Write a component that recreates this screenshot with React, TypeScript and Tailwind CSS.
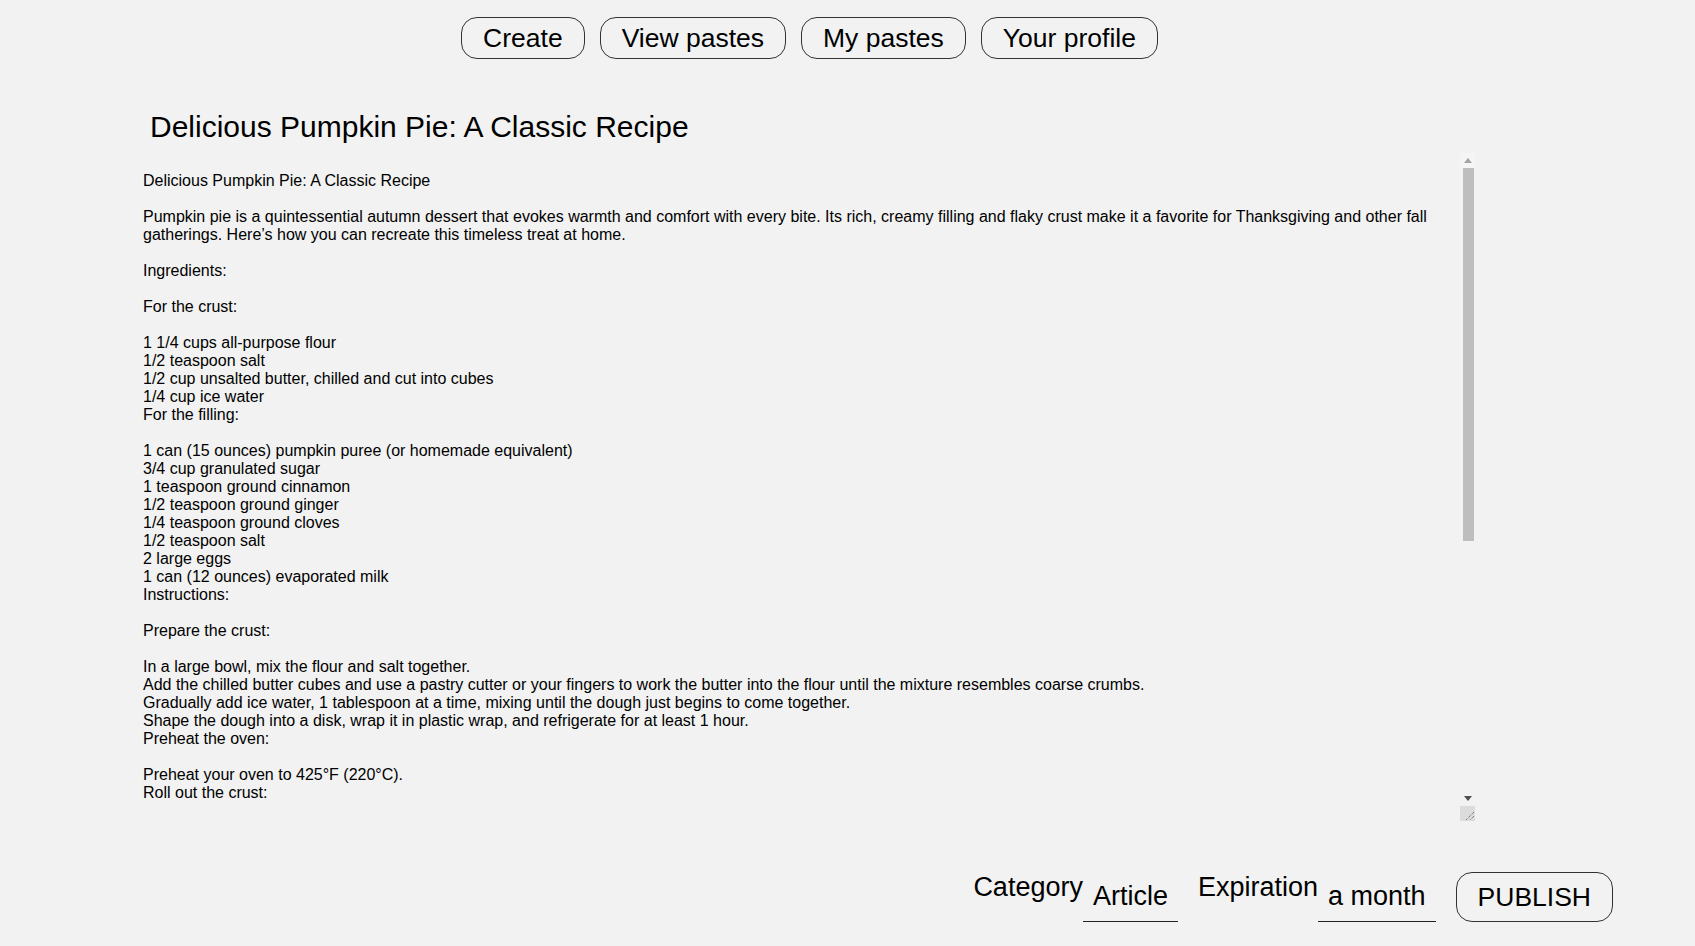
import React from "react";

const recipe = `Delicious Pumpkin Pie: A Classic Recipe

Pumpkin pie is a quintessential autumn dessert that evokes warmth and comfort with every bite. Its rich, creamy filling and flaky crust make it a favorite for Thanksgiving and other fall gatherings. Here’s how you can recreate this timeless treat at home.

Ingredients:

For the crust:

1 1/4 cups all-purpose flour
1/2 teaspoon salt
1/2 cup unsalted butter, chilled and cut into cubes
1/4 cup ice water
For the filling:

1 can (15 ounces) pumpkin puree (or homemade equivalent)
3/4 cup granulated sugar
1 teaspoon ground cinnamon
1/2 teaspoon ground ginger
1/4 teaspoon ground cloves
1/2 teaspoon salt
2 large eggs
1 can (12 ounces) evaporated milk
Instructions:

Prepare the crust:

In a large bowl, mix the flour and salt together.
Add the chilled butter cubes and use a pastry cutter or your fingers to work the butter into the flour until the mixture resembles coarse crumbs.
Gradually add ice water, 1 tablespoon at a time, mixing until the dough just begins to come together.
Shape the dough into a disk, wrap it in plastic wrap, and refrigerate for at least 1 hour.
Preheat the oven:

Preheat your oven to 425°F (220°C).
Roll out the crust:

On a lightly floured surface, roll out the dough into a 12-inch circle.
Transfer it to a 9-inch pie dish, trimming and crimping the edges as desired.
Make the filling:

In a large bowl, whisk together the pumpkin puree, sugar, cinnamon, ginger, cloves, and salt.
Beat in the eggs, then gradually stir in the evaporated milk until smooth.
Assemble and bake:

Pour the filling into the prepared crust.
Bake at 425°F (220°C) for 15 minutes, then reduce the temperature to 350°F (175°C).
Continue baking for 40-50 minutes, or until a knife inserted near the center comes out clean.
Cool and serve:

Allow the pie to cool on a wire rack for at least 2 hours.
Serve with whipped cream or a scoop of vanilla ice cream.
Tips:

For a richer flavor, use fresh pumpkin puree.
Cover the edges of the crust with foil if they begin to brown too quickly.
Chill the pie in the refrigerator for a firmer texture.

Enjoy your homemade pumpkin pie, a perfect finish to any autumn meal!`;

const navBtn =
  "h-[42px] px-[21px] flex items-center rounded-[16px] border border-[#333] bg-transparent text-[26.5px] leading-none text-black";

function FakeScrollbar() {
  return (
    <div className="absolute right-0 top-0 w-[15px] h-full flex flex-col">
      <div className="h-[15px] flex items-center justify-center bg-[#f5f5f5]">
        <svg width="8" height="5" viewBox="0 0 8 5">
          <polygon points="4,0 8,5 0,5" fill="#a3a3a3" />
        </svg>
      </div>
      <div className="flex-1 relative">
        <div className="absolute left-[3px] right-[1px] top-0 h-[373px] bg-[#bebebe]" />
      </div>
      <div className="h-[15px] flex items-center justify-center">
        <svg width="8" height="5" viewBox="0 0 8 5">
          <polygon points="0,0 8,0 4,5" fill="#505050" />
        </svg>
      </div>
      <div className="h-[15px] bg-[#dcdcdc]">
        <svg width="15" height="15" viewBox="0 0 15 15">
          <line x1="14" y1="6" x2="6" y2="14" stroke="#555" strokeWidth="1" strokeDasharray="1 1" />
          <line x1="14" y1="10" x2="10" y2="14" stroke="#555" strokeWidth="1" strokeDasharray="1 1" />
        </svg>
      </div>
    </div>
  );
}

export default function App() {
  return (
    <div
      className="w-[1695px] h-[946px] bg-[#f2f2f2] text-black overflow-hidden flex flex-col"
      style={{ fontFamily: '"Liberation Sans", Arial, sans-serif' }}
    >
      <nav className="flex justify-center gap-[15px] pt-[17px] pr-[76px]">
        <button className={navBtn}>Create</button>
        <button className={navBtn}>View pastes</button>
        <button className={navBtn}>My pastes</button>
        <button className={navBtn}>Your profile</button>
      </nav>

      <h1 className="mt-[51px] ml-[150px] text-[30px] leading-[normal] font-normal">
        Delicious Pumpkin Pie: A Classic Recipe
      </h1>

      <div className="relative mt-[9px] ml-[127px] w-[1348px] h-[668px]">
        <textarea
          className="block w-full h-[647px] pt-[19px] pl-[16px] pr-[31px] pb-0 bg-transparent border-0 outline-none resize-none overflow-hidden text-[16px] leading-[normal] text-black"
          defaultValue={recipe}
          readOnly
        />
        <FakeScrollbar />
      </div>

      <div className="mt-[51px] h-[50px] flex justify-end pr-[82px]">
        <span className="text-[27px] leading-[normal]">Category</span>
        <div className="flex items-center px-[10px] border-b border-[#222] text-[27px] leading-[normal] mr-[20px]">
          Article
        </div>
        <span className="text-[27px] leading-[normal]">Expiration</span>
        <div className="flex items-center px-[10px] border-b border-[#222] text-[27px] leading-[normal] mr-[20px]">
          a month
        </div>
        <button className="h-[50px] px-[21px] flex items-center rounded-[16px] border border-[#333] bg-transparent text-[26.5px] leading-none text-black">
          PUBLISH
        </button>
      </div>
    </div>
  );
}
